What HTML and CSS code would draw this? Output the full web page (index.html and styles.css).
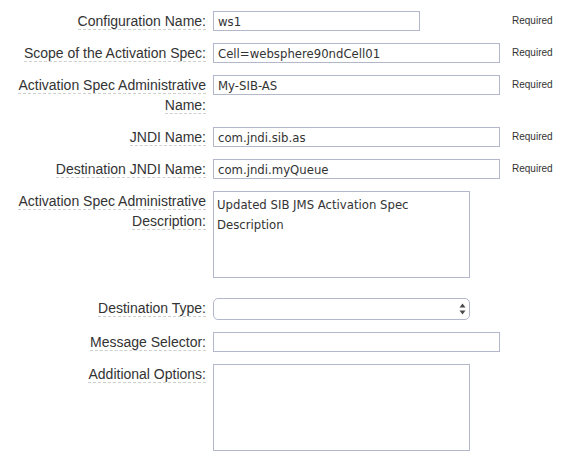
FILE: index.html
```html
<!DOCTYPE html>
<html>
<head>
<meta charset="utf-8">
<link rel="stylesheet" href="styles.css">
</head>
<body>
<form class="form">
  <label class="lbl"><span>Configuration Name:</span></label>
  <div class="field"><input class="inp short" value="ws1"></div>
  <div class="req">Required</div>

  <label class="lbl"><span>Scope of the Activation Spec:</span></label>
  <div class="field"><input class="inp long" value="Cell=websphere90ndCell01"></div>
  <div class="req">Required</div>

  <label class="lbl"><span>Activation Spec Administrative Name:</span></label>
  <div class="field"><input class="inp long" value="My-SIB-AS"></div>
  <div class="req">Required</div>

  <label class="lbl"><span>JNDI Name:</span></label>
  <div class="field"><input class="inp long" value="com.jndi.sib.as"></div>
  <div class="req">Required</div>

  <label class="lbl"><span>Destination JNDI Name:</span></label>
  <div class="field"><input class="inp long" value="com.jndi.myQueue"></div>
  <div class="req">Required</div>

  <label class="lbl"><span>Activation Spec Administrative Description:</span></label>
  <div class="field tall"><textarea class="ta">Updated SIB JMS Activation Spec Description</textarea></div>
  <div class="req"></div>

  <label class="lbl"><span>Destination Type:</span></label>
  <div class="field"><div class="selwrap"><select class="sel"><option></option></select><svg class="arrows" width="7" height="12" viewBox="0 0 7 12"><path d="M3.5 0.5 L6.5 4.5 L0.5 4.5 Z M3.5 11.5 L6.5 7.5 L0.5 7.5 Z" fill="#4a4a4a"/></svg></div></div>
  <div class="req"></div>

  <label class="lbl"><span>Message Selector:</span></label>
  <div class="field"><input class="inp long" value=""></div>
  <div class="req"></div>

  <label class="lbl"><span>Additional Options:</span></label>
  <div class="field"><textarea class="ta"></textarea></div>
  <div class="req"></div>
</form>
</body>
</html>
```
FILE: styles.css
```css
html, body {
  margin: 0;
  padding: 0;
  background: #fff;
}
.form {
  display: grid;
  grid-template-columns: 206px 287px auto;
  column-gap: 7px;
  row-gap: 12px;
  padding-top: 11px;
  align-items: start;
}
.lbl {
  font-family: "Liberation Sans", Arial, sans-serif;
  font-size: 14px;
  line-height: 20px;
  color: #333;
  text-align: right;
  padding-left: 10px;
}
.lbl span {
  border-bottom: 1px dashed #cfcfcf;
}
.field {
  display: flex;
}
.field.tall {
  margin-bottom: 8px;
}
.inp, .ta, .sel {
  box-sizing: border-box;
  border: 1px solid #b3b7cb;
  font-family: "DejaVu Sans Condensed", "DejaVu Sans", sans-serif;
  font-size: 13px;
  color: #333;
  background: #fff;
  margin: 0;
  outline: none;
}
.inp {
  height: 20px;
  padding: 0 4px;
}
.short { width: 207px; }
.long { width: 287px; }
.ta {
  width: 257px;
  height: 87px;
  padding: 3px 3px;
  line-height: 20px;
  resize: none;
}
.selwrap {
  position: relative;
  width: 257px;
}
.sel {
  appearance: none;
  -webkit-appearance: none;
  width: 257px;
  height: 22px;
  border-radius: 5px;
}
.arrows {
  position: absolute;
  left: 246px;
  top: 5px;
}
.req {
  font-family: "Liberation Sans", Arial, sans-serif;
  font-size: 10px;
  line-height: 20px;
  color: #333;
  padding-left: 5px;
}
```
